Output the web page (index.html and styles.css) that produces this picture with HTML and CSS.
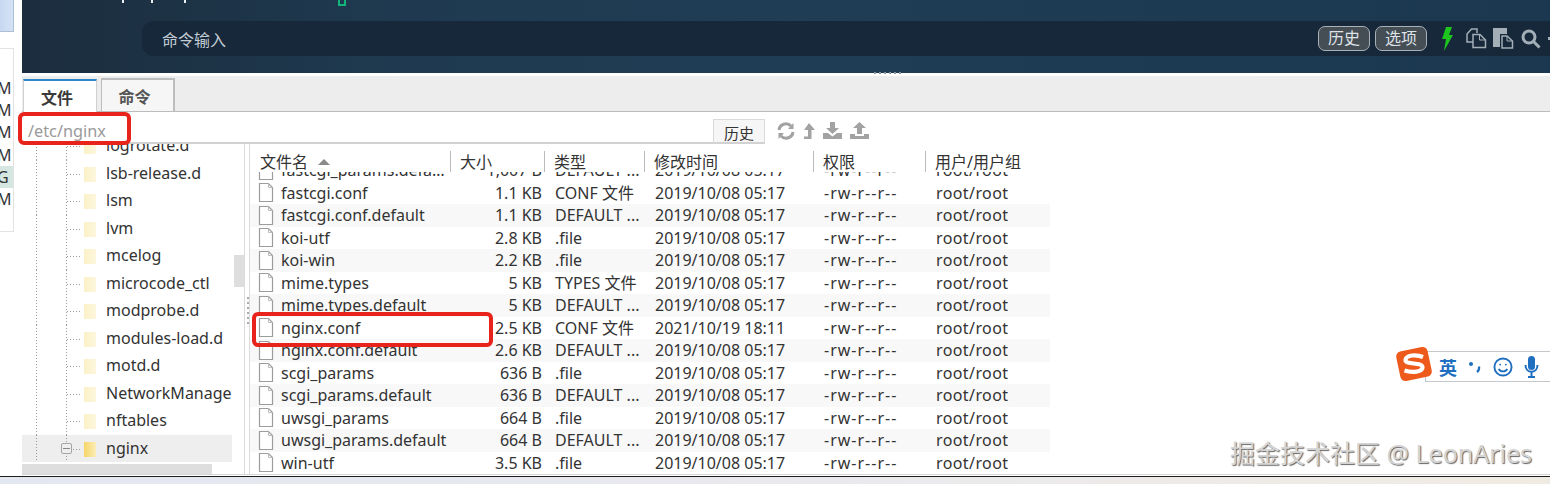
FILE: index.html
```html
<!DOCTYPE html>
<html lang="zh-CN">
<head>
<meta charset="utf-8">
<title>FinalShell</title>
<link rel="stylesheet" href="styles.css">
</head>
<body>
<svg class="defs" width="0" height="0" aria-hidden="true">
  <symbol id="file" viewBox="0 0 16 21"><path d="M1.5 1.5H10.5L14.5 5.5V19.5H1.5Z" fill="#fff" stroke="#9c9c9c" stroke-width="1.2"/><path d="M10.5 1.5V5.5H14.5" fill="none" stroke="#bdbdbd"/></symbol>
</svg>
<div class="app">
  <aside class="sliver">
    <div class="sliver-top"></div>
    <div class="sliver-panel">
      <div class="sl">M</div><div class="sl">M</div><div class="sl">M</div><div class="sl">M</div><div class="sl sl-hi">G</div><div class="sl">M</div>
    </div>
  </aside>
  <main class="main">
    <section class="term">
      <div class="cursor-line"><span class="cursor"></span></div>
      <div class="cmd">
        <span class="cmd-label">命令输入</span>
        <span class="cmd-btn">历史</span>
        <span class="cmd-btn">选项</span>
        <svg class="ic bolt" width="12" height="24" viewBox="0 0 12 24"><path d="M5 0H11L8 8H12L3 24L5 12H1Z" fill="#1fc51f"/></svg>
        <svg class="ic copy" width="21" height="21" viewBox="0 0 21 21" fill="none" stroke="#a3aeb7" stroke-width="1.5"><path d="M7 14H1V6L5.500 1H11V5"/><path d="M7 6.500H14L19.500 12V19.500H7Z"/><path d="M13.500 6.500V12H19.500" stroke-width="1"/></svg>
        <svg class="ic paste" width="21" height="21" viewBox="0 0 21 21"><path d="M0 0H14V6H7V19H0Z" fill="#a3aeb7"/><path d="M9 8H14L19.500 13V20H9Z" fill="none" stroke="#a3aeb7" stroke-width="1.500"/><path d="M14 8V13H19.500" fill="none" stroke="#a3aeb7"/></svg>
        <svg class="ic search" width="20" height="20" viewBox="0 0 20 20" fill="none" stroke="#a3aeb7" stroke-width="3"><circle cx="8" cy="8" r="6"/><path d="M12.500 12.500L18.500 18.500"/></svg>
        <span class="dash"></span>
      </div>
      <span class="grip"></span>
    </section>
    <nav class="tabs">
      <span class="tab tab-on">文件</span>
      <span class="tab">命令</span>
    </nav>
    <div class="pathbar">
      <div class="path-input">/etc/nginx</div>
      <span class="path-btn">历史</span>
      <div class="tools">
        <svg width="18" height="18" viewBox="0 0 18 18" fill="none" stroke="#a2a2a2" stroke-width="3"><path d="M2 8a7 7 0 0 1 12-4"/><path d="M16 10a7 7 0 0 1-12 4"/><path d="M16.500 1V7H11" fill="#a2a2a2" stroke="none"/><path d="M1.500 17V11H7" fill="#a2a2a2" stroke="none"/></svg>
        <svg width="12" height="18" viewBox="0 0 12 18"><path d="M6 1L12 8H8.500V17H1V14.500H5V8H1Z" fill="#a2a2a2"/></svg>
        <svg width="19" height="18" viewBox="0 0 19 18"><path d="M7 0H12V6H16L9.500 12L3 6H7Z" fill="#a2a2a2"/><path d="M0 11H5L9.500 14.500L14 11H19V17H0Z" fill="#a2a2a2"/></svg>
        <svg width="19" height="18" viewBox="0 0 19 18"><path d="M9.500 0L16 6H12V12H7V6H3Z" fill="#a2a2a2"/><path d="M0 12H5V14H14V12H19V17H0Z" fill="#a2a2a2"/></svg>
      </div>
    </div>
    <div class="split">
      <div class="tree">
        <div class="tree-scroll">
          <div class="node"><i class="folder"></i>logrotate.d</div>
          <div class="node"><i class="folder"></i>lsb-release.d</div>
          <div class="node"><i class="folder"></i>lsm</div>
          <div class="node"><i class="folder"></i>lvm</div>
          <div class="node"><i class="folder"></i>mcelog</div>
          <div class="node"><i class="folder"></i>microcode_ctl</div>
          <div class="node"><i class="folder"></i>modprobe.d</div>
          <div class="node"><i class="folder"></i>modules-load.d</div>
          <div class="node"><i class="folder"></i>motd.d</div>
          <div class="node"><i class="folder"></i>NetworkManager</div>
          <div class="node"><i class="folder"></i>nftables</div>
          <div class="node node-on"><b class="minus"></b><i class="folder folder-on"></i>nginx</div>
        </div>
        <span class="vbar"></span>
        <span class="hbar"></span>
      </div>
      <div class="divider"></div>
      <div class="list">
        <div class="head">
          <span class="hc">文件名<i class="sort"></i></span>
          <span class="hc">大小</span>
          <span class="hc">类型</span>
          <span class="hc">修改时间</span>
          <span class="hc">权限</span>
          <span class="hc">用户/用户组</span>
        </div>
        <div class="rows">
          <div class="row first"><svg class="fi"><use href="#file"/></svg><span class="n">fastcgi_params.default</span><span class="s">1,007 B</span><span>DEFAULT ...</span><span>2019/10/08 05:17</span><span>-rw-r--r--</span><span>root/root</span></div>
          <div class="row"><svg class="fi"><use href="#file"/></svg><span class="n">fastcgi.conf</span><span class="s">1.1 KB</span><span>CONF 文件</span><span>2019/10/08 05:17</span><span>-rw-r--r--</span><span>root/root</span></div>
          <div class="row alt"><svg class="fi"><use href="#file"/></svg><span class="n">fastcgi.conf.default</span><span class="s">1.1 KB</span><span>DEFAULT ...</span><span>2019/10/08 05:17</span><span>-rw-r--r--</span><span>root/root</span></div>
          <div class="row"><svg class="fi"><use href="#file"/></svg><span class="n">koi-utf</span><span class="s">2.8 KB</span><span>.file</span><span>2019/10/08 05:17</span><span>-rw-r--r--</span><span>root/root</span></div>
          <div class="row alt"><svg class="fi"><use href="#file"/></svg><span class="n">koi-win</span><span class="s">2.2 KB</span><span>.file</span><span>2019/10/08 05:17</span><span>-rw-r--r--</span><span>root/root</span></div>
          <div class="row"><svg class="fi"><use href="#file"/></svg><span class="n">mime.types</span><span class="s">5 KB</span><span>TYPES 文件</span><span>2019/10/08 05:17</span><span>-rw-r--r--</span><span>root/root</span></div>
          <div class="row alt"><svg class="fi"><use href="#file"/></svg><span class="n">mime.types.default</span><span class="s">5 KB</span><span>DEFAULT ...</span><span>2019/10/08 05:17</span><span>-rw-r--r--</span><span>root/root</span></div>
          <div class="row"><svg class="fi"><use href="#file"/></svg><span class="n">nginx.conf</span><span class="s">2.5 KB</span><span>CONF 文件</span><span>2021/10/19 18:11</span><span>-rw-r--r--</span><span>root/root</span></div>
          <div class="row alt"><svg class="fi"><use href="#file"/></svg><span class="n">nginx.conf.default</span><span class="s">2.6 KB</span><span>DEFAULT ...</span><span>2019/10/08 05:17</span><span>-rw-r--r--</span><span>root/root</span></div>
          <div class="row"><svg class="fi"><use href="#file"/></svg><span class="n">scgi_params</span><span class="s">636 B</span><span>.file</span><span>2019/10/08 05:17</span><span>-rw-r--r--</span><span>root/root</span></div>
          <div class="row alt"><svg class="fi"><use href="#file"/></svg><span class="n">scgi_params.default</span><span class="s">636 B</span><span>DEFAULT ...</span><span>2019/10/08 05:17</span><span>-rw-r--r--</span><span>root/root</span></div>
          <div class="row"><svg class="fi"><use href="#file"/></svg><span class="n">uwsgi_params</span><span class="s">664 B</span><span>.file</span><span>2019/10/08 05:17</span><span>-rw-r--r--</span><span>root/root</span></div>
          <div class="row alt"><svg class="fi"><use href="#file"/></svg><span class="n">uwsgi_params.default</span><span class="s">664 B</span><span>DEFAULT ...</span><span>2019/10/08 05:17</span><span>-rw-r--r--</span><span>root/root</span></div>
          <div class="row"><svg class="fi"><use href="#file"/></svg><span class="n">win-utf</span><span class="s">3.5 KB</span><span>.file</span><span>2019/10/08 05:17</span><span>-rw-r--r--</span><span>root/root</span></div>
        </div>
      </div>
    </div>
  </main>
</div>
<footer class="foot"></footer>

<span class="mark mark-path"></span>
<span class="mark mark-file"></span>

<div class="ime">
  <svg class="ime-logo" width="38" height="36" viewBox="0 0 38 36"><rect x="3" y="3" width="32" height="30" rx="5" fill="#ee5a1c" transform="rotate(-12 19 18)"/><path d="M28 11C21 8 11 9 10.500 14C10 19 27 16 27.500 21C28 26 17 27 9.500 24.500" fill="none" stroke="#fff" stroke-width="4.200"/></svg>
  <div class="ime-bar">
    <span class="ime-en">英</span>
    <svg width="14" height="14" viewBox="0 0 14 14"><circle cx="3" cy="4" r="2" fill="#1f6fc0"/><path d="M11 6.500C11.500 9 10.500 11 9 12" fill="none" stroke="#1f6fc0" stroke-width="2.200"/></svg>
    <svg width="20" height="20" viewBox="0 0 21 21" fill="none" stroke="#1f6fc0" stroke-width="2"><circle cx="10.500" cy="10.500" r="9"/><circle cx="7.500" cy="8" r="1" fill="#1f6fc0" stroke="none"/><circle cx="13.500" cy="8" r="1" fill="#1f6fc0" stroke="none"/><path d="M6 12.500C8 16 13 16 15 12.500"/></svg>
    <svg width="15" height="22" viewBox="0 0 15 22"><rect x="4" y="0" width="7" height="14" rx="3.500" fill="#1f6fc0"/><path d="M1.500 9C1.500 18 13.500 18 13.500 9M7.500 16V21M4 21H11" fill="none" stroke="#1f6fc0" stroke-width="2"/></svg>
    <svg width="12" height="20" viewBox="0 0 12 20" fill="none" stroke="#1f6fc0" stroke-width="2.200"><rect x="2" y="2" width="14" height="16" rx="2"/><path d="M2 10H12"/></svg>
  </div>
</div>
<div class="watermark">掘金技术社区 @ LeonAries</div>
</body>
</html>
```
FILE: styles.css
```css
* { box-sizing: border-box; }
html, body { margin: 0; padding: 0; }
body {
  width: 1550px;
  height: 484px;
  overflow: hidden;
  position: relative;
  background: #fff;
  font-family: "Noto Sans", "Noto Sans CJK SC", sans-serif;
  font-size: 16px;
  color: #333;
}
.defs { position: absolute; }
.app { display: flex; height: 476px; }

/* left sliver of the window behind */
.sliver { width: 22px; flex: none; background: #fff; }
.sliver-top { width: 14px; height: 32px; background: linear-gradient(90deg, #c6d8f1, #d4e2f5); border-right: 1px solid #aebed4; border-bottom: 1px solid #aebed4; }
.sliver-panel { width: 14px; height: 184px; margin-top: 16px; padding-top: 28px; border: 1px solid #e2e2e2; border-left: 0; overflow: hidden; }
.sl { height: 22.2px; line-height: 22px; font-size: 16px; text-indent: -3px; color: #333; }
.sl-hi { background: #d6e6e1; }

.main { flex: 1; min-width: 0; display: flex; flex-direction: column; }

/* terminal */
.term {
  height: 73px;
  margin-bottom: 3px;
  flex: none;
  padding-top: 21px;
  position: relative;
  background: linear-gradient(90deg, #1b2d3e, #1f3a50 25%, #1f3d55 50%, #1b3850);
}
.term::before {
  content: "";
  position: absolute;
  left: 100px;
  top: 0;
  width: 64px;
  height: 3px;
  background:
    linear-gradient(#e8eef2, #e8eef2) 0 0 / 2px 3px no-repeat,
    linear-gradient(#e8eef2, #e8eef2) 29px 0 / 2px 3px no-repeat,
    linear-gradient(#e8eef2, #e8eef2) 62px 0 / 2px 3px no-repeat;
}
.cursor-line { position: absolute; left: 316px; top: 0; }
.cursor { display: block; width: 8px; height: 6px; border: 2px solid #14b57a; border-top: 0; }
.cmd {
  height: 35px;
  margin-left: 120px;
  display: flex;
  align-items: center;
  background: #16283a;
  border-radius: 12px 0 0 12px;
  padding-left: 20px;
  overflow: hidden;
}
.cmd-label { font-size: 16px; color: #c4ccd3; margin-right: 1034px; width: 122px; flex: none; white-space: nowrap; }
.cmd-btn {
  flex: none;
  width: 52px;
  height: 25px;
  margin-right: 5px;
  text-align: center;
  line-height: 23px;
  font-size: 16px;
  color: #dfe3e7;
  background: #454d55;
  border: 1px solid #a8b0b8;
  border-radius: 7px;
}
.ic { flex: none; }
.bolt { margin: 0 13px 0 9px; }
.copy { margin-right: 6px; }
.paste { margin-right: 7px; }
.dash { flex: none; width: 4px; height: 3px; margin-left: 7px; background: #a3aeb7; }
.grip { position: absolute; left: 852px; bottom: -1px; width: 30px; height: 2px; background: repeating-linear-gradient(90deg, #8a949c 0 2px, transparent 2px 5px); }

/* tabs */
.tabs {
  height: 36px;
  flex: none;
  display: flex;
  align-items: flex-end;
  gap: 4px;
  padding-left: 1px;
  background: #eeeded;
  border-bottom: 1px solid #bcbcbc;
}
.tab {
  width: 74px;
  height: 33px;
  padding-right: 6px;
  text-align: center;
  line-height: 34px;
  font-weight: 700;
  font-size: 16px;
  color: #555;
  background: #f6f6f6;
  border: 2px solid #bdbdbd;
  border-bottom-width: 0;
  border-left-width: 1px;
}
.tab-on { height: 33px; margin-bottom: -1px; background: #fff; color: #3a3a3a; border: 1px solid #d0d0d0; border-top: 2px solid #2d86c9; border-bottom: 0; }

/* path */
.pathbar {
  height: 32px;
  flex: none;
  display: flex;
  align-items: flex-end;
  background: #fff;
}
.path-input { width: 691px; height: 32px; padding-left: 6px; line-height: 38px; color: #9a9a9a; font-size: 16.300px; border-bottom: 2px solid #d2d2d2; }
.path-btn { width: 52px; height: 25px; text-align: center; line-height: 26px; font-size: 15px; color: #333; background: #f6f6f6; border: 1px solid #dadada; border-bottom: 2px solid #d2d2d2; }
.tools { display: flex; align-items: center; gap: 8px; height: 32px; margin-left: 12px; padding-top: 5px; }

/* panes */
.split { flex: 1; min-height: 0; display: flex; border-bottom: 1px solid #d6d6d6; margin-bottom: 1px; }
.tree {
  width: 223px;
  flex: none;
  position: relative;
  overflow: hidden;
  border-right: 1px solid #dcdcdc;
}
.tree-scroll { width: 210px; margin-top: -12px; overflow: hidden; }
.node {
  height: 27.5px;
  line-height: 27px;
  padding-left: 62px;
  position: relative;
  white-space: nowrap;
  overflow: hidden;
  background:
    repeating-linear-gradient(180deg, #9a9a9a 0 1px, transparent 1px 3px) 14px 0 / 1px 100% no-repeat,
    repeating-linear-gradient(180deg, #9a9a9a 0 1px, transparent 1px 3px) 44px 0 / 1px 100% no-repeat,
    repeating-linear-gradient(90deg, #9a9a9a 0 1px, transparent 1px 3px) 45px 14px / 15px 1px no-repeat;
}
.node-on { background-color: #eeeeee; }
.folder { display: inline-block; width: 12px; height: 15px; margin-right: 10px; vertical-align: -3px; background: linear-gradient(90deg, #fbf1c8, #fdf6dc); }
.folder-on { background: linear-gradient(90deg, #f6d468, #fbeeb8); }
.minus { position: absolute; left: 39px; top: 8px; width: 11px; height: 11px; background: #eee linear-gradient(#888, #888) center / 7px 1px no-repeat; border: 1px solid #a5a5a5; border-radius: 2px; }
.vbar { position: absolute; right: 0; top: 111px; width: 10px; height: 32px; background: #dedede; }
.hbar { position: absolute; left: 0; bottom: 0; width: 190px; height: 10px; background: #dedede; }
.divider {
  width: 5px;
  flex: none;
  border-right: 1px solid #dcdcdc;
  background: repeating-linear-gradient(180deg, #aaa 0 2px, transparent 2px 5px) 2px 153px / 2px 28px no-repeat;
}

.list { flex: 1; min-width: 0; overflow: hidden; display: flex; flex-direction: column; }
.head {
  height: 28px;
  flex: none;
  display: grid;
  grid-template-columns: 200px 94px 100px 169px 112px 200px;
  padding-top: 7px;
}
.hc { height: 21px; line-height: 22px; font-size: 16px; padding-left: 9px; color: #333; border-left: 1px solid #bbb; white-space: nowrap; }
.hc:first-child { border-left: 0; padding-left: 10px; }
.sort { display: inline-block; margin-left: 10px; vertical-align: 3px; width: 0; height: 0; border: 6px solid transparent; border-top: 0; border-bottom: 6px solid #8a8a8a; }
.rows { flex: 1; min-height: 0; overflow: hidden; }
.row {
  width: 800px;
  height: 22.5px;
  display: grid;
  grid-template-columns: 23px 169px 92px 100px 169px 112px 1fr;
  align-items: center;
  padding-left: 8px;
  font-size: 16px;
  line-height: 22px;
  white-space: nowrap;
  color: #333;
}
.row > span { overflow: hidden; }
.row > span:nth-child(4) { padding-left: 13px; }
.row > span:nth-child(5) { padding-left: 13px; }
.row > span:nth-child(6) { padding-left: 13px; letter-spacing: 1px; }
.row > span:nth-child(7) { padding-left: 13px; letter-spacing: 0.4px; }
.first { margin-top: -13px; }
.alt { background: #f8f8f8; }
.fi { width: 16px; height: 21px; }
.n { text-overflow: ellipsis; }
.s { text-align: right; }

.foot { height: 8px; border-top: 1px solid #1e1e1e; background: linear-gradient(90deg, #e3e7f0, #e9e9ee 50%, #f0ebe2); }

/* annotations */
.mark { position: absolute; border: 4px solid #e8231c; border-radius: 6px; }
.mark-path { left: 18px; top: 112px; width: 113px; height: 33px; }
.mark-file { left: 252px; top: 312px; width: 241px; height: 35px; }

/* input method widget */
.ime { position: absolute; left: 1395px; top: 346px; width: 155px; height: 38px; }
.ime-logo { position: absolute; left: 0; top: 0; z-index: 1; }
.ime-bar {
  position: absolute;
  left: 30px;
  top: 5px;
  width: 125px;
  height: 31px;
  padding-left: 13px;
  display: flex;
  align-items: center;
  gap: 11px;
  background: #fff;
  border: 1px solid #c4c8cc;
  border-right: 0;
  overflow: hidden;
}
.ime-bar svg { flex: none; }
.ime-en { flex: none; font-size: 18px; font-weight: 700; color: #1f6fc0; }

.watermark {
  position: absolute;
  left: 1230px;
  top: 436px;
  font-size: 25px;
  line-height: 34px;
  white-space: nowrap;
  color: #d4d4d4;
  text-shadow: 1px 1px 1px #666;
}
```
